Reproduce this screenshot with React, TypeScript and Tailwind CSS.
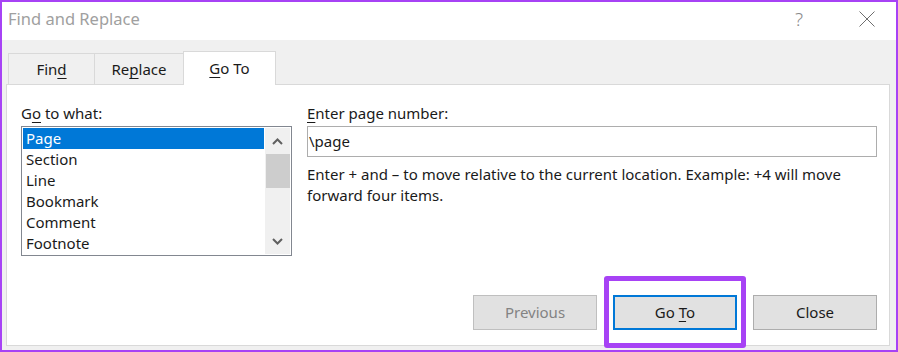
import React from 'react';

const items = ['Page', 'Section', 'Line', 'Bookmark', 'Comment', 'Footnote'];

function U({ children }: { children: React.ReactNode }) {
  return <span className="underline underline-offset-[3px] decoration-1">{children}</span>;
}

export default function App() {
  return (
    <div className="w-[898px] h-[352px] flex flex-col border-2 border-[#a742f5] bg-[#f0f0f0] font-['Segoe_UI','Noto_Sans',sans-serif] text-[15px] text-[#1a1a1a] overflow-hidden">
      {/* title bar */}
      <div className="h-[38px] bg-white flex items-center pl-[6px] pr-[20px] pb-[4px] shrink-0">
        <span className="text-[16.5px] text-[#a0a0a0] flex-1">Find and Replace</span>
        <span className="text-[19px] font-light text-[#8a8a8a] mr-[56px] leading-none">?</span>
        <svg width="16" height="16" viewBox="0 0 16 16" className="mr-[1px]">
          <path d="M0.5 0.5 L15.5 15.5 M15.5 0.5 L0.5 15.5" stroke="#6e6e6e" strokeWidth="1" fill="none" />
        </svg>
      </div>

      {/* body */}
      <div className="flex-1 flex flex-col pl-[4px] pr-[6px] pb-[4px] pt-[11px]">
        {/* tabs */}
        <div className="flex items-end ml-[2px] h-[33px] relative z-10">
          <div className="w-[87px] h-[31px] border border-b-0 border-[#d9d9d9] flex items-center justify-center pt-[1px]">
            Fin<U>d</U>
          </div>
          <div className="w-[89px] h-[31px] border border-b-0 border-l-0 border-[#d9d9d9] flex items-center justify-center pt-[1px]">
            Re<U>p</U>lace
          </div>
          <div className="w-[93px] h-[34px] -mb-[1px] bg-white border border-b-0 border-[#d9d9d9] flex items-center justify-center -ml-[1px]">
            <U>G</U>o To
          </div>
        </div>

        {/* panel */}
        <div className="flex-1 bg-white border border-[#d9d9d9] flex flex-col pl-[14px] pr-[12px] pt-[18px] pb-[15px]">
          <div className="flex gap-[15px]">
            <div className="w-[271px] flex flex-col">
              <div className="leading-[20px] mb-[3px]">G<U>o</U> to what:</div>
              <div className="h-[130px] border border-[#828790] p-[1px] flex">
                <div className="flex-1 flex flex-col">
                  {items.map((it, i) => (
                    <div
                      key={it}
                      className={
                        'h-[21px] leading-[21px] pl-[3px] ' +
                        (i === 0 ? 'bg-[#0078d7] text-white' : '')
                      }
                    >
                      {it}
                    </div>
                  ))}
                </div>
                <div className="w-[25px] ml-[1px] bg-[#f0f0f0] flex flex-col items-center">
                  <div className="h-[26px] flex items-center justify-center">
                    <svg width="11" height="7" viewBox="0 0 11 7">
                      <path d="M1 6 L5.5 1.5 L10 6" stroke="#606060" strokeWidth="2" fill="none" />
                    </svg>
                  </div>
                  <div className="w-[24px] h-[34px] bg-[#cdcdcd]" />
                  <div className="flex-1" />
                  <div className="h-[26px] flex items-center justify-center">
                    <svg width="11" height="7" viewBox="0 0 11 7">
                      <path d="M1 1 L5.5 5.5 L10 1" stroke="#606060" strokeWidth="2" fill="none" />
                    </svg>
                  </div>
                </div>
              </div>
            </div>

            <div className="flex-1 flex flex-col">
              <div className="leading-[20px] mb-[3px]"><U>E</U>nter page number:</div>
              <div className="h-[31px] border border-[#adadad] flex items-center pl-[1px]">\page</div>
              <p className="mt-[7px] leading-[21px] pr-[20px]">
                Enter + and – to move relative to the current location. Example: +4 will move forward four items.
              </p>
            </div>
          </div>

          <div className="flex-1" />

          <div className="flex justify-end gap-[16px]">
            <button className="w-[124px] h-[35px] bg-[#e1e1e1] border border-[#bfbfbf] text-[#838383]">Previous</button>
            <div className="relative">
              <div className="absolute -left-[9px] -right-[9px] -top-[19px] -bottom-[18px] border-[5px] border-[#a742f5] rounded-[3px]" />
              <button className="relative w-[124px] h-[35px] bg-[#e1e1e1] border-2 border-[#0078d7]">
                Go <U>T</U>o
              </button>
            </div>
            <button className="w-[124px] h-[35px] bg-[#e1e1e1] border border-[#adadad]">Close</button>
          </div>
        </div>
      </div>
    </div>
  );
}
